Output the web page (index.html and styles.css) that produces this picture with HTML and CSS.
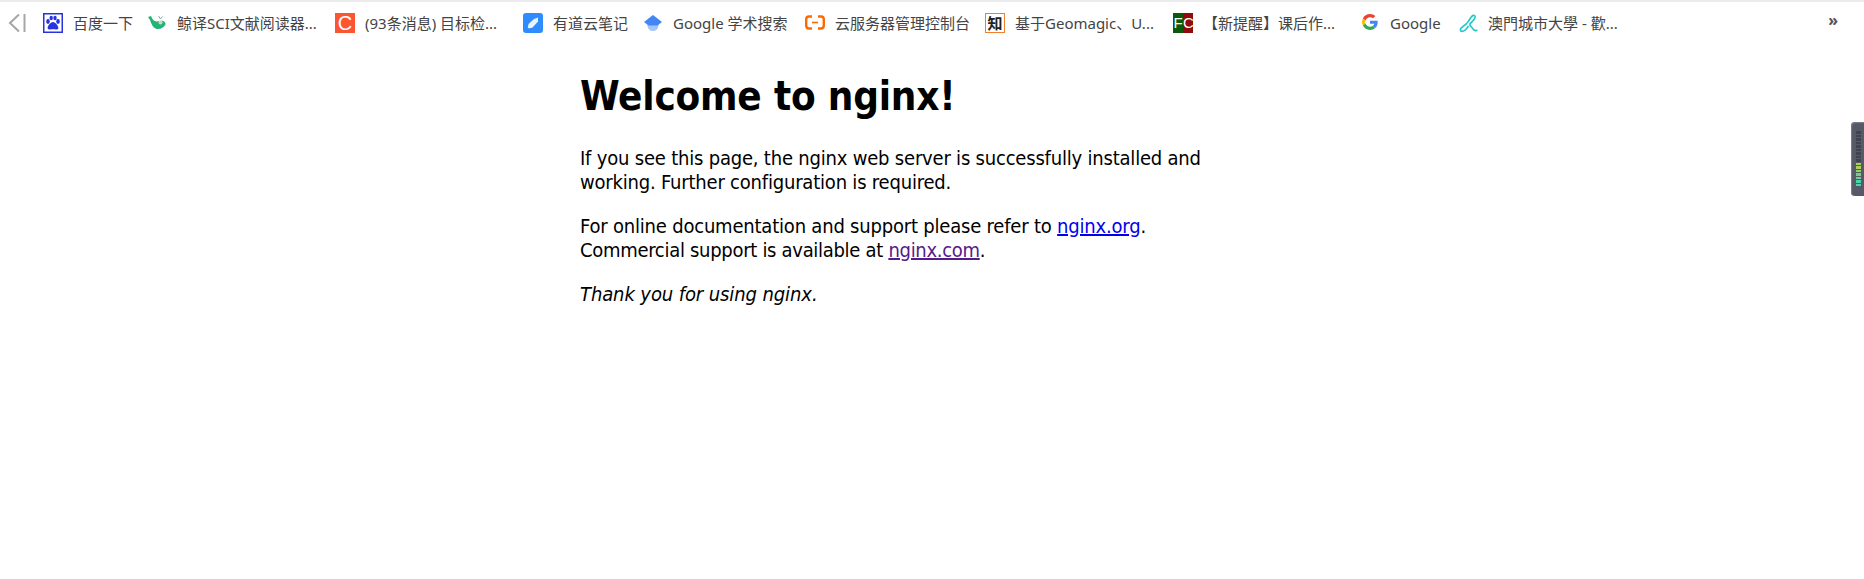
FILE: index.html
```html
<!DOCTYPE html>
<html lang="zh-CN">
<head>
<meta charset="utf-8">
<title>Welcome to nginx!</title>
<link rel="stylesheet" href="styles.css">
</head>
<body>
<nav class="bookmarks">
  <svg class="nav-toggle" width="20" height="20" viewBox="0 0 20 20"><path d="M12 1.500 3 10 12 18.500" fill="none" stroke="#a6a6a6" stroke-width="2"/><path d="M17.500 1V19" stroke="#a6a6a6" stroke-width="2"/></svg>
  <a class="mark m1"><svg class="ico" viewBox="0 0 20 20"><rect x=".75" y=".75" width="18.5" height="18.5" fill="#fff" stroke="#2932e1" stroke-width="1.5"/><g fill="#2932e1"><ellipse cx="5" cy="8.500" rx="1.800" ry="2.400"/><ellipse cx="8.200" cy="5" rx="1.700" ry="2.300"/><ellipse cx="12" cy="5" rx="1.700" ry="2.300"/><ellipse cx="15" cy="8.500" rx="1.800" ry="2.400"/><path d="M10 9c2.400 0 6 4.500 5.300 6.500-.6 1.600-3.500.8-5.300.8s-4.600.8-5.300-.8C4 13.500 7.600 9 10 9z"/></g></svg><span>百度一下</span></a>
  <a class="mark m2"><svg class="ico ico-whale" viewBox="0 0 18 14"><path d="M0 1 3 0 4.500 3C7 6 9 5.500 12 5 15 4 18 6 17.500 8.500 16 12 11 14 7.500 12.500 4.500 11 3 7 2 4Z" fill="#22b573"/><circle cx="12.500" cy="6.500" r="2" fill="#c9d8d0"/><path d="M10.500 0 12.500 3M14.500 0.500 12.500 3" stroke="#8a948e" stroke-width=".9" fill="none"/></svg><span>鲸译SCI文献阅读器...</span></a>
  <a class="mark m3"><span class="ico tile tile-c">C</span><span>(93条消息) 目标检...</span></a>
  <a class="mark m4"><svg class="ico" viewBox="0 0 20 20"><rect width="20" height="20" rx="3" fill="#2f8cff"/><path d="M5.500 11 11 6 15 4.500 15 8.500 10 14C8.500 15.500 5 15.500 4.800 14.500Z" fill="#e9f3ff"/></svg><span>有道云笔记</span></a>
  <a class="mark m5"><svg class="ico ico-scholar" viewBox="0 0 18 18"><circle cx="9" cy="11.500" r="5.500" fill="#a5c6fb"/><path d="M9 1 18 8 13.500 11.500H4.500L0 8Z" fill="#4285f4"/></svg><span>Google 学术搜索</span></a>
  <a class="mark m6"><svg class="ico" viewBox="0 0 20 20"><path d="M7 3.500H4C2 3.500 1.200 4.500 1.200 6.500V12.500C1.200 14.500 2 15.500 4 15.500H7M13 3.500H16C18 3.500 18.800 4.500 18.800 6.500V12.500C18.800 14.500 18 15.500 16 15.500H13" fill="none" stroke="#ff6a00" stroke-width="2.400"/><path d="M7 9.500H13" stroke="#ff6a00" stroke-width="1.600"/></svg><span>云服务器管理控制台</span></a>
  <a class="mark m7"><span class="ico tile tile-zhi">知</span><span>基于Geomagic、U...</span></a>
  <a class="mark m8"><span class="ico tile tile-fc"><i class="fc-f">F</i><i class="fc-c">C</i></span><span>【新提醒】课后作...</span></a>
  <a class="mark m9"><svg class="ico ico-google" viewBox="0 0 48 48"><path fill="#ea4335" d="M24 9.500c3.500 0 6.700 1.200 9.200 3.600l6.900-6.900C35.900 2.400 30.500 0 24 0 14.600 0 6.500 5.400 2.600 13.200l8 6.200C12.500 13.700 17.800 9.500 24 9.500z"/><path fill="#4285f4" d="M47 24.500c0-1.600-.1-3.100-.4-4.500H24v9h12.900c-.6 3-2.200 5.500-4.800 7.200l7.700 6c4.500-4.200 7.200-10.300 7.200-17.700z"/><path fill="#fbbc05" d="M10.500 28.600c-.5-1.400-.8-3-.8-4.600s.3-3.200.8-4.600l-8-6.200C.9 16.500 0 20.100 0 24s.9 7.500 2.600 10.800l7.900-6.200z"/><path fill="#34a853" d="M24 48c6.500 0 11.900-2.100 15.900-5.800l-7.700-6c-2.200 1.400-4.900 2.300-8.200 2.300-6.200 0-11.500-4.200-13.400-9.900l-8 6.200C6.500 42.600 14.600 48 24 48z"/></svg><span>Google</span></a>
  <a class="mark m10"><svg class="ico ico-um" viewBox="0 0 20 20"><g fill="none" stroke="#1fc8c8" stroke-width="1.700"><path d="M8.500 9.500 13.500 2.500C15 .8 17.500 1.200 17 3.500 16.500 6 13.500 8 11 11"/><path d="M8.500 9.500 2.500 14.500C.8 16 1.200 18.500 3.500 18.300 6 18 8.500 15 10 12.500"/><path d="M11 11 15 16C16.500 17.800 18.500 18 19 16.500"/></g></svg><span>澳門城市大學 - 歡...</span></a>
  <span class="more">»</span>
</nav>
<main class="page">
  <h1>Welcome to nginx!</h1>
  <p>If you see this page, the nginx web server is successfully installed and<br>working. Further configuration is required.</p>
  <p>For online documentation and support please refer to <a class="link" href="#a">nginx.org</a>.<br><span class="tight">Commercial support is available at <a class="link visited" href="#b">nginx.com</a>.</span></p>
  <p><em class="thanks">Thank you for using nginx.</em></p>
</main>
<aside class="meter" aria-hidden="true">
  <i></i><i></i><i></i><i></i><i></i><i></i><i></i><i></i><i></i>
  <i class="y"></i><i class="y"></i><i class="l"></i><i class="g"></i><i class="g"></i><i class="t"></i><i class="t"></i>
</aside>
</body>
</html>
```
FILE: styles.css
```css
* { box-sizing: border-box; }
html, body { margin: 0; padding: 0; background: #fff; }
body { height: 579px; overflow: hidden; color: #000; font-family: "DejaVu Sans", sans-serif; }

.bookmarks {
  height: 41px;
  border-top: 2px solid #ebebeb;
  display: flex;
  align-items: center;
  padding: 3px 0 0 7px;
  font: 15px/20px "Noto Sans", "Noto Sans CJK SC", sans-serif;
  color: #444;
}
.nav-toggle { flex: none; margin-right: 16px; }
.mark { display: flex; align-items: center; flex: none; white-space: nowrap; }
.ico { flex: none; width: 20px; height: 20px; margin-right: 10px; }
.ico-whale { width: 18px; height: 14px; margin-right: 11px; }
.ico-scholar { width: 18px; height: 18px; margin-right: 11px; }
.ico-google { width: 16px; height: 16px; margin: 0 12px 2px 2px; }
.ico-um { width: 19px; height: 19px; }
.m1 { width: 105px; }
.m2 { width: 187px; }
.m3 { width: 188px; }
.m4 { width: 121px; }
.m5 { width: 161px; }
.m6 { width: 180px; }
.m7 { width: 188px; }
.m8 { width: 187px; }
.m9 { width: 99px; }
.tile { display: block; text-align: center; color: #fff; font-style: normal; }
.tile-c { background: #fc5531; font: 20px/20px "Liberation Sans", sans-serif; }
.tile-zhi { background: #fff; color: #222; border: 1px solid #f08030; font: bold 15px/18px "Noto Sans CJK SC", sans-serif; }
.tile-fc { display: flex; font: 15px/20px "Liberation Sans", sans-serif; }
.fc-f, .fc-c { display: block; width: 10px; font-style: normal; color: #fff; }
.fc-f { background: #0a5a0a; }
.fc-c { background: #8e0c0c; letter-spacing: -1px; }
.more { margin-left: auto; margin-right: 26px; color: #555; font-size: 16px; font-weight: 700; line-height: 20px; padding-bottom: 6px; }

.page { width: 700px; margin-left: 580px; font-size: 20px; line-height: 24px; letter-spacing: -0.2px; font-family: "DejaVu Sans Condensed", "DejaVu Sans", sans-serif; font-stretch: condensed; }
h1 { font-size: 40px; line-height: 48px; font-weight: 700; margin: 31px 0 26px; }
.page p { margin: 0 0 20px; }
.tight { letter-spacing: -0.3px; }
.thanks { letter-spacing: -0.1px; }
.link { color: #0000ee; }
.link.visited { color: #551a8b; }

.meter {
  position: absolute; top: 122px; right: 0; width: 13px; height: 74px;
  background: #555a66; border-radius: 4px 0 0 4px;
  display: flex; flex-direction: column; gap: 1px;
  padding: 9px 3px 9px 5px;
  box-shadow: inset 1px 1px 1px #7a808c;
}
.meter i { display: block; height: 2.500px; background: #3f444e; }
.meter .y { background: #a9cf5c; }
.meter .l { background: #8fd06c; }
.meter .g { background: #6fd08c; }
.meter .t { background: #4fd0b0; }
```
